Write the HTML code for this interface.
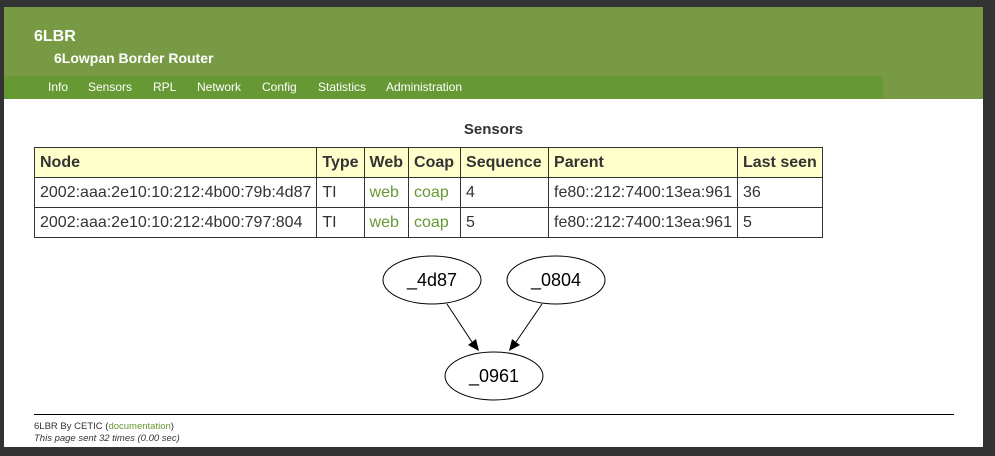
<!DOCTYPE html>
<html><head><meta charset="utf-8"><style>
html,body{margin:0;padding:0;width:995px;height:456px;overflow:hidden;background:#333;font-family:"Liberation Sans",sans-serif}
#page{position:absolute;left:4px;top:7px;width:979px;height:440px;background:#fff}
#hdr{position:absolute;left:0;top:0;width:979px;height:92px;background:#789a45}
#hdr .t{position:absolute;left:30px;top:21px;color:#fff;font-weight:bold;font-size:16px}
#hdr .s{position:absolute;left:50px;top:43px;color:#fff;font-weight:bold;font-size:14px}
#nav{position:absolute;left:0;top:69px;width:879px;height:23px;background:#669933}
#nav span{position:absolute;top:4px;color:#fff;font-size:12px}
h2{position:absolute;left:0;width:979px;top:114px;margin:0;text-align:center;font-size:15px;color:#333}
table{position:absolute;left:30px;top:140px;border-collapse:collapse;font-size:16px;color:#333}
td,th{border:1px solid #333;padding:0 5px;height:29px;text-align:left;white-space:nowrap}
th{background:#ffffcc}
a{color:#669933;text-decoration:none}
#hr{position:absolute;left:30px;top:407px;width:920px;height:1px;background:#000}
.f{position:absolute;left:30px;font-size:9.5px;color:#333}
</style></head><body><div id="page">
<div id="hdr"><div class="t">6LBR</div><div class="s">6Lowpan Border Router</div>
<div id="nav"><span style="left:44px">Info</span><span style="left:84px">Sensors</span><span style="left:149px">RPL</span><span style="left:193px">Network</span><span style="left:258px">Config</span><span style="left:314px">Statistics</span><span style="left:382px">Administration</span></div></div>
<h2>Sensors</h2>
<table>
<tr><th style="width:270px">Node</th><th>Type</th><th>Web</th><th style="width:41px">Coap</th><th style="width:77px">Sequence</th><th style="width:177px">Parent</th><th>Last seen</th></tr>
<tr><td>2002:aaa:2e10:10:212:4b00:79b:4d87</td><td>TI</td><td><a>web</a></td><td><a>coap</a></td><td>4</td><td>fe80::212:7400:13ea:961</td><td>36</td></tr>
<tr><td>2002:aaa:2e10:10:212:4b00:797:804</td><td>TI</td><td><a>web</a></td><td><a>coap</a></td><td>5</td><td>fe80::212:7400:13ea:961</td><td>5</td></tr>
</table>
<svg style="position:absolute;left:-4px;top:-7px" width="995" height="456">
<g fill="none" stroke="#000" stroke-width="1">
<ellipse cx="432" cy="280" rx="49" ry="24"/><ellipse cx="556" cy="280" rx="49" ry="24"/><ellipse cx="494" cy="376" rx="49" ry="24"/>
<line x1="447" y1="304" x2="472" y2="342"/><line x1="542" y1="304" x2="516" y2="342"/></g>
<polygon points="468,345 476,339 479,351" fill="#000"/><polygon points="512,339 520,345 509,351" fill="#000"/>
<g font-family="Liberation Sans,sans-serif" font-size="18" text-anchor="middle" fill="#000">
<text x="432" y="286">_4d87</text><text x="556" y="286">_0804</text><text x="494" y="382">_0961</text></g>
</svg>
<div id="hr"></div>
<div class="f" style="top:414px">6LBR By CETIC (<a>documentation</a>)</div>
<div class="f" style="top:426px;font-style:italic">This page sent 32 times (0.00 sec)</div>
</div></body></html>
